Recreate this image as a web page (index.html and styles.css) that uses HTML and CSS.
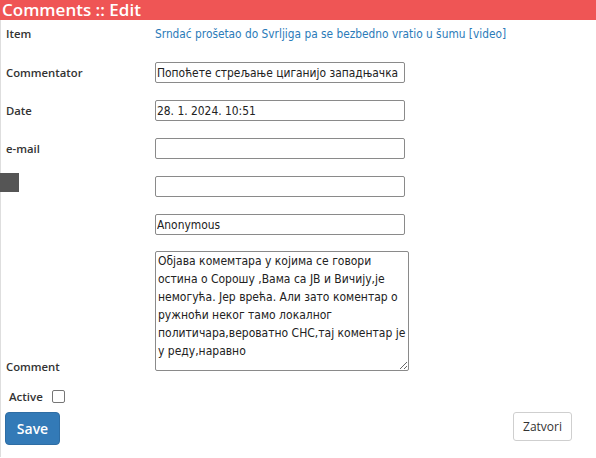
FILE: index.html
```html
<!DOCTYPE html>
<html lang="sr">
<head>
<meta charset="utf-8">
<title>Comments :: Edit</title>
<link rel="stylesheet" href="styles.css">
</head>
<body>
<div class="header">Comments :: Edit</div>
<div class="panel">
  <div class="form">
    <div class="label">Item</div>
    <div class="field field-center"><a class="link" href="#">Srndać prošetao do Svrljiga pa se bezbedno vratio u šumu [video]</a></div>

    <div class="label">Commentator</div>
    <div class="field"><input class="input" type="text" value="Попоћете стрељање циганијо западњачка"></div>

    <div class="label">Date</div>
    <div class="field"><input class="input" type="text" value="28. 1. 2024. 10:51"></div>

    <div class="label">e-mail</div>
    <div class="field"><input class="input" type="text" value=""></div>

    <div class="label"><span class="marker"></span></div>
    <div class="field"><input class="input" type="text" value=""></div>

    <div class="label"></div>
    <div class="field"><input class="input" type="text" value="Anonymous"></div>

    <div class="label label-bottom">Comment</div>
    <div class="field"><textarea class="textarea">Објава комемтара у којима се говори остина о Сорошу ,Вама са ЈВ и Вичију,је немогућа. Јер врећа. Али зато коментар о ружноћи неког тамо локалног политичара,вероватно СНС,тај коментар је у реду,наравно</textarea></div>

    <div class="active">
      <span>Active</span>
      <span class="checkbox"></span>
    </div>
  </div>
  <div class="actions">
    <button class="btn-save" type="button">Save</button>
    <button class="btn-close" type="button">Zatvori</button>
  </div>
</div>
</body>
</html>
```
FILE: styles.css
```css
html, body {
  margin: 0;
  padding: 0;
  background: #fff;
}
body {
  width: 596px;
  height: 458px;
  overflow: hidden;
  font-family: "Open Sans", "DejaVu Sans", sans-serif;
  color: #333;
}
.header {
  height: 20px;
  background: #ef5555;
  color: #fff;
  font-family: "Open Sans", sans-serif;
  font-weight: 600;
  font-size: 17px;
  line-height: 20px;
  padding-left: 2px;
}
.panel {
  border-left: 1px solid #dedede;
  padding: 2px 24px 12px 4px;
  min-height: 430px;
  box-sizing: border-box;
}
.form {
  display: grid;
  grid-template-columns: 150px 1fr;
  grid-template-rows: 23px 21px 21px 21px 21px 20px 120px 16px;
  row-gap: 17px;
  align-items: center;
}
.label {
  padding-left: 1px;
  font-size: 11.3px;
  font-weight: 600;
  color: #333;
  height: 100%;
  display: flex;
  align-items: center;
}
.label-bottom {
  align-items: flex-end;
  line-height: 12px;
  margin-bottom: -3px;
}
.field {
  height: 100%;
  display: flex;
  align-items: flex-start;
}
.field-center {
  align-items: center;
}
.link {
  color: #2b7bb9;
  text-decoration: none;
  font-family: "DejaVu Sans Condensed", "DejaVu Sans", sans-serif;
  font-size: 11.8px;
}
.input {
  box-sizing: border-box;
  width: 250px;
  height: 21px;
  border: 1px solid #8a8a8a;
  border-radius: 2px;
  padding: 0 1px;
  font-family: "DejaVu Sans Condensed", "DejaVu Sans", sans-serif;
  font-size: 11.9px;
  color: #222;
  background: #fff;
  margin: 0;
}
.textarea {
  box-sizing: border-box;
  width: 254px;
  height: 120px;
  border: 1px solid #8a8a8a;
  border-radius: 2px;
  padding: 0 2px;
  font-family: "DejaVu Sans Condensed", "DejaVu Sans", sans-serif;
  font-size: 12px;
  line-height: 18px;
  color: #222;
  resize: both;
  margin: 0;
}
.marker {
  display: block;
  width: 19px;
  height: 19px;
  background: #555;
  margin-left: -6px;
  margin-top: -8px;
}
.active {
  grid-column: 1 / span 2;
  display: flex;
  align-items: center;
  gap: 9px;
  padding-left: 4px;
  font-size: 11.5px;
  font-weight: 600;
  color: #333;
}
.checkbox {
  display: inline-block;
  box-sizing: border-box;
  width: 13px;
  height: 13px;
  border: 1px solid #767676;
  border-radius: 2px;
  background: #fff;
}
.actions {
  display: flex;
  justify-content: space-between;
  align-items: flex-start;
  margin-top: 8px;
}
.btn-save {
  width: 55px;
  height: 33px;
  background: #337ab7;
  border: 1px solid #2e6da4;
  border-radius: 4px;
  color: #fff;
  font-family: "Open Sans", sans-serif;
  font-weight: 600;
  font-size: 14px;
  padding: 0;
}
.btn-close {
  width: 59px;
  height: 29px;
  background: #fff;
  border: 1px solid #cfcfcf;
  border-radius: 3px;
  color: #333;
  font-family: "Open Sans", sans-serif;
  font-size: 12px;
  padding: 0;
}
```
